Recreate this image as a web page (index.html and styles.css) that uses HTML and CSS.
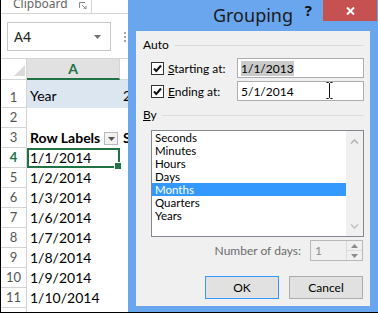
FILE: index.html
```html
<!DOCTYPE html>
<html>
<head>
<meta charset="utf-8">
<link rel="stylesheet" href="styles.css">
</head>
<body>
<div class="screen">
  <div class="excel">
    <div class="ribbon">
      <span class="ribbon-label">Clipboard</span>
      <svg class="launcher" width="8" height="7" viewBox="0 0 8 7"><path d="M0.5 6V0.5H6" fill="none" stroke="#8a8a8a"/><path d="M3 3L7 7M7 4V7H4" fill="none" stroke="#8a8a8a"/></svg>
      <span class="ribbon-sep"></span>
    </div>
    <div class="formula">
      <div class="namebox"><span class="namebox-text">A4</span><svg class="nb-arrow" width="7" height="4" viewBox="0 0 7 4"><path d="M0 0H7L3.5 4Z" fill="#707070"/></svg></div>
      <svg class="grip" width="3" height="11" viewBox="0 0 3 11"><rect x="0" y="0" width="2" height="2" fill="#a8a8a8"/><rect x="0" y="4" width="2" height="2" fill="#a8a8a8"/><rect x="0" y="8" width="2" height="2" fill="#a8a8a8"/></svg>
    </div>
    <div class="sheet">
      <div class="corner"><svg width="11" height="11" viewBox="0 0 11 11"><path d="M11 0V11H0Z" fill="#dadada"/></svg></div>
      <div class="colhead colhead-sel">A</div>
      <div class="colhead"></div>

      <div class="rowhead">1</div><div class="cell cell-year">Year</div><div class="cell cell-year">2</div>
      <div class="rowhead">2</div><div class="cell"></div><div class="cell"></div>
      <div class="rowhead">3</div><div class="cell cell-bold">Row Labels<span class="filter-btn"><svg width="7" height="4" viewBox="0 0 7 4"><path d="M0 0H7L3.5 4Z" fill="#555"/></svg></span></div><div class="cell cell-bold">S</div>
      <div class="rowhead rowhead-sel">4</div><div class="cell cell-active">1/1/2014</div><div class="cell"></div>
      <div class="rowhead">5</div><div class="cell">1/2/2014</div><div class="cell"></div>
      <div class="rowhead">6</div><div class="cell">1/3/2014</div><div class="cell"></div>
      <div class="rowhead">7</div><div class="cell">1/6/2014</div><div class="cell"></div>
      <div class="rowhead">8</div><div class="cell">1/7/2014</div><div class="cell"></div>
      <div class="rowhead">9</div><div class="cell">1/8/2014</div><div class="cell"></div>
      <div class="rowhead">10</div><div class="cell">1/9/2014</div><div class="cell"></div>
      <div class="rowhead">11</div><div class="cell">1/10/2014</div><div class="cell"></div>
      <div class="rowhead"></div><div class="cell"></div><div class="cell"></div>
    </div>
  </div>

  <div class="dialog">
    <div class="titlebar">
      <span></span>
      <span class="title">Grouping</span>
      <div class="win-ctrls">
        <span class="help">?</span>
        <span class="close"><svg width="9" height="8" viewBox="0 0 9 8"><path d="M1 0.5L8 7.5M8 0.5L1 7.5" stroke="#fff" stroke-width="2"/></svg></span>
      </div>
    </div>
    <div class="client">
      <div class="grp-head"><span>Auto</span><span class="rule"></span></div>
      <div class="field field-first">
        <span class="chk"><svg width="11" height="11" viewBox="0 0 11 11"><path d="M2 5.5L4.3 8L9 2.5" fill="none" stroke="#111" stroke-width="2"/></svg></span>
        <span class="field-label"><u>S</u>tarting at:</span>
        <span class="textbox"><span class="text-sel">1/1/2013</span></span>
      </div>
      <div class="field">
        <span class="chk"><svg width="11" height="11" viewBox="0 0 11 11"><path d="M2 5.5L4.3 8L9 2.5" fill="none" stroke="#111" stroke-width="2"/></svg></span>
        <span class="field-label"><u>E</u>nding at:</span>
        <span class="textbox">5/1/2014<svg class="ibeam" width="7" height="17" viewBox="0 0 7 17"><path d="M0.5 0.5H2.5L3.5 1.5L4.5 0.5H6.5M3.5 1.5V15.5M0.5 16.5H2.5L3.5 15.5L4.5 16.5H6.5" fill="none" stroke="#111"/></svg></span>
      </div>
      <div class="grp-head grp-by"><span><u>B</u>y</span><span class="rule"></span></div>
      <div class="listbox">
        <ul class="items">
          <li>Seconds</li>
          <li>Minutes</li>
          <li>Hours</li>
          <li>Days</li>
          <li class="item-sel">Months</li>
          <li>Quarters</li>
          <li>Years</li>
        </ul>
        <div class="vscroll">
          <svg width="9" height="5" viewBox="0 0 9 5"><path d="M1 4.5L4.5 1L8 4.5" fill="none" stroke="#b4b4b4" stroke-width="1.6"/></svg>
          <svg width="9" height="5" viewBox="0 0 9 5"><path d="M1 0.5L4.5 4L8 0.5" fill="none" stroke="#c4c4c4" stroke-width="1.6"/></svg>
        </div>
      </div>
      <div class="days">
        <span class="days-label">Number of days:</span>
        <div class="spin">
          <span class="spin-val">1</span>
          <div class="spin-btns">
            <span class="spin-btn"><svg width="7" height="4" viewBox="0 0 7 4"><path d="M0 4H7L3.5 0Z" fill="#8a8a8a"/></svg></span>
            <span class="spin-btn"><svg width="7" height="4" viewBox="0 0 7 4"><path d="M0 0H7L3.5 4Z" fill="#8a8a8a"/></svg></span>
          </div>
        </div>
      </div>
      <div class="buttons">
        <span class="btn btn-default">OK</span>
        <span class="btn">Cancel</span>
      </div>
    </div>
  </div>
</div>
</body>
</html>
```
FILE: styles.css
```css
* { box-sizing: border-box; }
html, body { margin: 0; padding: 0; }
body { width: 378px; height: 313px; overflow: hidden; background: #fff; }

.screen {
  position: relative;
  width: 378px;
  height: 313px;
  border-left: 1px solid #000;
  border-bottom: 1px solid #000;
  overflow: hidden;
  background: #fff;
}

/* ---------- Excel ---------- */
.excel { font-family: "Lato", "Liberation Sans", sans-serif; color: #000; }

.ribbon {
  height: 14px;
  border-bottom: 1px solid #d4d4d4;
  display: flex;
  align-items: flex-start;
  overflow: hidden;
}
.ribbon-label {
  font-family: "Noto Sans", "Liberation Sans", sans-serif;
  font-size: 12px;
  color: #666;
  line-height: 12px;
  margin: -2px 0 0 12px;
}
.launcher { margin: 2px 0 0 11px; }
.ribbon-sep { width: 1px; height: 13px; background: #d4d4d4; margin-left: 4px; }

.formula {
  height: 45px;
  border-bottom: 1px solid #d4d4d4;
  display: flex;
  align-items: flex-start;
  padding: 8px 0 0 6px;
}
.namebox {
  width: 104px;
  height: 29px;
  border: 1px solid #c6c6c6;
  display: flex;
  align-items: center;
  padding-left: 6px;
}
.namebox-text { font-family: "Noto Sans", sans-serif; font-size: 14px; color: #222; flex: 1; }
.nb-arrow { margin-right: 9px; }
.grip { margin: 10px 0 0 13px; }

.sheet {
  display: grid;
  grid-template-columns: 26px 93px 1fr;
  grid-template-rows: 21px 28px repeat(10, 20px) 20px;
}
.corner {
  border-right: 1px solid #d4d4d4;
  border-bottom: 1px solid #d4d4d4;
  display: flex;
  align-items: flex-end;
  justify-content: flex-end;
  padding: 0 1px 3px 0;
}
.colhead {
  border-right: 1px solid #d4d4d4;
  border-bottom: 1px solid #d4d4d4;
  background: #fff;
  text-align: center;
  font-size: 14px;
  line-height: 19px;
}
.colhead-sel {
  background: #e1e1e1;
  border-bottom: 2px solid #217346;
  color: #217346;
  font-weight: bold;
}
.rowhead {
  border-right: 1px solid #d4d4d4;
  border-bottom: 1px solid #d4d4d4;
  text-align: center;
  font-size: 13px;
  color: #555;
  display: flex;
  align-items: flex-end;
  justify-content: center;
  padding-bottom: 2px;
}
.rowhead-sel { color: #217346; font-weight: bold; }
.cell {
  position: relative;
  font-size: 14px;
  display: flex;
  align-items: flex-end;
  padding: 0 0 2px 3px;
  white-space: nowrap;
}
.cell-year { background: #dce6f1; padding-bottom: 4px; }
.cell-bold { font-weight: bold; }
.filter-btn {
  width: 14px;
  height: 13px;
  border: 1px solid #b9b9b9;
  background: #f2f2f2;
  display: inline-flex;
  align-items: center;
  justify-content: center;
  margin: 0 0 1px 4px;
}
.cell-active { box-shadow: inset 0 0 0 2px #217346; }
.cell-active::after {
  content: "";
  position: absolute;
  right: -2px;
  bottom: -2px;
  width: 6px;
  height: 6px;
  background: #217346;
  border: 1px solid #fff;
}

/* ---------- Dialog ---------- */
.dialog {
  position: absolute;
  left: 127px;
  top: 0;
  width: 250px;
  height: 312px;
  background: #6aa6ee;
  display: flex;
  flex-direction: column;
  font-family: "Lato", "Noto Sans", sans-serif;
  font-size: 12px;
  color: #000;
}
.titlebar {
  height: 31px;
  display: grid;
  grid-template-columns: 1fr auto 1fr;
  align-items: start;
}
.title {
  font-family: "Noto Sans", sans-serif;
  font-size: 18px;
  line-height: 30px;
  color: #1a1a1a;
}
.win-ctrls {
  justify-self: end;
  display: flex;
  align-items: flex-start;
  margin-right: 1px;
}
.help {
  font-family: "Noto Sans", sans-serif;
  font-weight: bold;
  font-size: 15px;
  line-height: 20px;
  color: #111;
  margin-right: 11px;
}
.close {
  width: 54px;
  height: 21px;
  background: #c75050;
  display: flex;
  align-items: center;
  justify-content: center;
}
.client {
  margin: 0 8px;
  height: 275px;
  background: #f0f0f0;
  padding: 6px 6px 0 7px;
  display: flex;
  flex-direction: column;
}
.grp-head {
  height: 16px;
  display: flex;
  align-items: center;
  gap: 5px;
  line-height: 16px;
}
.grp-by { margin-top: 6px; }
.rule { flex: 1; height: 1px; background: #dcdcdc; }
.field {
  height: 20px;
  margin: 3px 0 0 8px;
  display: flex;
  align-items: center;
}
.field-first { margin-top: 5px; }
.chk {
  width: 13px;
  height: 13px;
  border: 1px solid #333;
  background: #fff;
  margin-right: 4px;
  display: flex;
}
.field-label { width: 69px; }
.textbox {
  position: relative;
  flex: 1;
  height: 20px;
  border: 1px solid #abadb3;
  background: #fff;
  padding-left: 3px;
  display: flex;
  align-items: center;
}
.text-sel { background: #cacaca; }
.ibeam { position: absolute; left: 88px; top: 0; }

.listbox {
  margin: 7px 0 0 8px;
  height: 107px;
  border: 1px solid #828790;
  background: #fff;
  display: flex;
}
.items { list-style: none; margin: 0; padding: 0; flex: 1; }
.items li { height: 13px; line-height: 13px; padding-left: 3px; font-size: 11.5px; }
.items .item-sel { background: #3399ff; color: #fff; }
.vscroll {
  width: 17px;
  background: #f0f0f0;
  display: flex;
  flex-direction: column;
  justify-content: space-between;
  align-items: center;
  padding: 8px 0 7px;
}

.days {
  margin-top: 3px;
  height: 21px;
  display: flex;
  justify-content: flex-end;
  align-items: center;
  gap: 9px;
}
.days-label { color: #6d6d6d; }
.spin {
  width: 53px;
  height: 21px;
  border: 1px solid #b8b8b8;
  background: #f0f0f0;
  display: flex;
  margin-right: 1px;
}
.spin-val { flex: 1; color: #8a8a8a; padding-left: 4px; line-height: 19px; }
.spin-btns { width: 16px; display: flex; flex-direction: column; }
.spin-btn {
  flex: 1;
  display: flex;
  align-items: center;
  justify-content: center;
  border-left: 1px solid #dcdcdc;
}
.spin-btn + .spin-btn { border-top: 1px solid #dcdcdc; }

.buttons {
  margin-top: 15px;
  display: flex;
  justify-content: flex-end;
  gap: 10px;
  margin-right: 1px;
}
.btn {
  width: 74px;
  height: 23px;
  border: 1px solid #adadad;
  background: #e1e1e1;
  display: flex;
  align-items: center;
  justify-content: center;
}
.btn-default { border-color: #3399ff; }
```
